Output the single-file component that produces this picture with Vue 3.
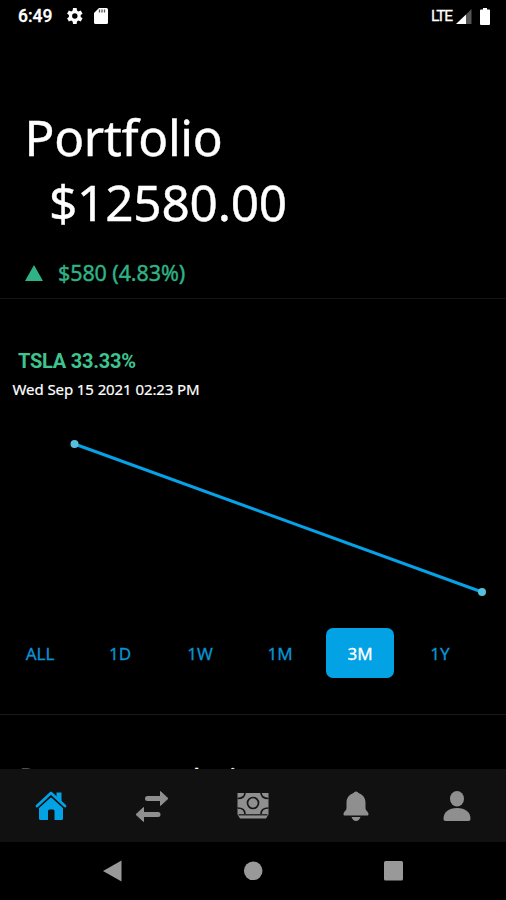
<template>
  <div class="screen">
    <header class="status-bar">
      <span class="clock">6:49</span>
      <svg class="gear" width="18" height="18" viewBox="2 2 20 20">
        <path fill="#fff" fill-rule="evenodd" d="M19.4 13a7.500 7.500 0 0 0 0-2l2.100-1.600-2-3.500-2.500 1a7.300 7.300 0 0 0-1.700-1L14.900 3h-4l-.4 2.900a7.300 7.300 0 0 0-1.700 1l-2.500-1-2 3.500L6.400 11a7.500 7.500 0 0 0 0 2l-2.100 1.600 2 3.500 2.500-1a7.300 7.300 0 0 0 1.700 1l.4 2.900h4l.4-2.900a7.300 7.300 0 0 0 1.700-1l2.500 1 2-3.500zM12.900 15a3 3 0 1 1 0-6 3 3 0 0 1 0 6z" />
      </svg>
      <svg class="card" width="14" height="16" viewBox="0 0 14 16">
        <path fill="#fff" d="M5 0h7.500Q14 0 14 1.500v13q0 1.500-1.500 1.500h-11Q0 16 0 14.500V5z" />
        <path stroke="#555" stroke-width="1.300" d="M5.500 1.500v3M8 1.500v3M10.500 1.500v3" />
      </svg>
      <span class="lte">LTE</span>
      <svg class="signal" width="16" height="15" viewBox="0 0 16 15">
        <path fill="#555" d="M10 5.500 15.500 0v15H10z" />
        <path fill="#fff" d="M0 15 10 5.500V15z" />
      </svg>
      <svg class="battery" width="10" height="17" viewBox="0 0 10 17">
        <path fill="#fff" d="M3 0h4v1.500h2q1 0 1 1V16q0 1-1 1H1q-1 0-1-1V2.500q0-1 1-1h2z" />
      </svg>
    </header>

    <main class="content">
      <section class="summary">
        <h1>Portfolio</h1>
        <p class="balance">$12580.00</p>
        <p class="gain">
          <svg width="18" height="16" viewBox="0 0 18 16"><path fill="#2fb285" d="M9 0 18 16H0z" /></svg>
          <span>$580 (4.83%)</span>
        </p>
      </section>

      <section class="history">
        <p class="ticker">TSLA 33.33%</p>
        <p class="date">Wed Sep 15 2021 02:23 PM</p>
        <svg class="chart" width="506" height="170" viewBox="0 0 506 170">
          <polyline :points="linePoints" fill="none" stroke="#06a1e6" stroke-width="3" />
          <circle v-for="p in points" :key="p.x" :cx="p.x" :cy="p.y" r="4" fill="#56bfdc" />
        </svg>
        <div class="ranges">
          <button
            v-for="r in ranges"
            :key="r"
            :class="{ active: r === selected }"
            @click="selected = r"
          >{{ r }}</button>
        </div>
      </section>

      <h2>Recommendations</h2>
    </main>

    <nav class="tabs">
      <a class="active">
        <svg width="32" height="32" viewBox="0 0 32 32">
          <path fill="currentColor" d="M16 7 28 17.500v11q0 1.500-1.500 1.500H19.500v-9q0-1.500-1.500-1.500h-3.500q-1.500 0-1.500 1.500v9H5.500Q4 30 4 28.500v-11z" />
          <path fill="currentColor" d="M21.500 2.500h5v9l-5-4.500z" />
          <path fill="none" stroke="#111" stroke-width="3.600" d="M2 17.500 16 4.700l14 12.800" />
          <path fill="none" stroke="currentColor" stroke-width="2.800" stroke-linecap="round" stroke-linejoin="round" d="M2 16 16 3 30 16" />
        </svg>
      </a>
      <a>
        <svg width="34" height="34" viewBox="0 0 34 34">
          <path fill="none" stroke="currentColor" stroke-width="5" stroke-linecap="round" d="M12.500 9.500h14M8 25.500h15" />
          <path fill="currentColor" stroke="currentColor" stroke-linejoin="round" d="M25.500 2.500 33 9.500 25.500 16.500zM8.500 18.500 1 25.500l7.500 7z" />
        </svg>
      </a>
      <a>
        <svg width="32" height="28" viewBox="0 0 32 28">
          <path fill="currentColor" d="M.5 1h31v21.500L29 26.500H3L.5 22.500z" />
          <g fill="none" stroke="#161616" stroke-width="1.700">
            <circle cx="16" cy="11" r="5.500" />
            <path d="M8 .5q0 6-7.500 6M24 .5q0 6 7.500 6M8 22q0-6-7.500-6M24 22q0-6 7.500-6" />
            <path stroke-width="1.200" d="M1.500 22.800h29" />
          </g>
        </svg>
      </a>
      <a class="shifted">
        <svg width="26" height="32" viewBox="0 0 26 32">
          <path fill="currentColor" d="M13 1.500c1.500 0 2 1.300 3.500 2C21 5.500 22.500 9 22.500 13v5c0 3 3 3.500 3 6 0 1-.5 1.500-1.500 1.500H2C1 25.500.5 25 .5 24c0-2.500 3-3 3-6v-5c0-4 1.500-7.500 6-9.500 1.500-.7 2-2 3.500-2zM8.500 27h9q-1.500 4-4.500 4t-4.500-4z" />
        </svg>
      </a>
      <a class="shifted">
        <svg width="28" height="30" viewBox="0 0 28 30">
          <ellipse cx="14" cy="7.700" rx="7" ry="7.700" fill="currentColor" />
          <path fill="currentColor" d="M.5 28c0-7 5-11 13.500-11s13.500 4 13.500 11q0 2-2 2h-23q-2 0-2-2z" />
        </svg>
      </a>
    </nav>

    <footer class="system-nav">
      <svg width="20" height="22" viewBox="0 0 20 22"><path fill="#999" d="M19.500.5v21L1 11z" /></svg>
      <svg width="20" height="20" viewBox="0 0 20 20"><circle cx="10.200" cy="9.800" r="9.300" fill="#999" /></svg>
      <svg width="20" height="20" viewBox="0 0 20 20"><rect width="19" height="19.500" rx="1.500" fill="#999" /></svg>
    </footer>
  </div>
</template>

<script setup>
import { ref, computed } from 'vue'

const ranges = ['ALL', '1D', '1W', '1M', '3M', '1Y']
const selected = ref('3M')

const points = [
  { x: 74.5, y: 24 },
  { x: 482, y: 172 }
]
const linePoints = computed(() => points.map(p => `${p.x},${p.y}`).join(' '))
</script>

<style>
body {
  margin: 0;
  background: #000;
}
</style>

<style scoped>
.screen {
  width: 506px;
  height: 900px;
  display: flex;
  flex-direction: column;
  overflow: hidden;
  background: #000;
  color: #fff;
  font-family: "Noto Sans", sans-serif;
}
h1, h2, p {
  margin: 0;
  font-weight: 400;
}
.status-bar {
  height: 32px;
  flex: none;
  display: flex;
  align-items: center;
  padding: 0 16px 0 18px;
  font-family: Roboto, sans-serif;
}
.clock {
  width: 47px;
  font-size: 17.5px;
  font-weight: 500;
  -webkit-text-stroke: 0.3px;
}
.card {
  margin-left: 11px;
}
.lte {
  margin-left: auto;
  font-size: 15.5px;
  letter-spacing: -1.1px;
  -webkit-text-stroke: 0.3px;
}
.signal {
  margin-left: 4px;
}
.battery {
  margin-left: 8px;
}
.content {
  flex: 1;
  min-height: 0;
  overflow: hidden;
}
.summary {
  height: 266px;
  border-bottom: 1px solid #131313;
}
h1 {
  padding: 72px 0 0 24.5px;
  font-size: 49.5px;
  line-height: 66px;
  letter-spacing: -0.3px;
  -webkit-text-stroke: 0.4px;
}
.balance {
  padding-left: 49px;
  font-size: 49.5px;
  line-height: 65px;
  letter-spacing: -0.2px;
  -webkit-text-stroke: 0.4px;
}
.gain {
  display: flex;
  align-items: center;
  gap: 15px;
  padding: 23px 0 0 25px;
  font-size: 21.5px;
  line-height: 30px;
  letter-spacing: -0.1px;
  color: #2fb285;
  -webkit-text-stroke: 0.4px;
}
.history {
  height: 415px;
  border-bottom: 1px solid #1a1a1a;
}
.ticker {
  padding: 48px 0 0 18px;
  font-family: Roboto, sans-serif;
  font-size: 20px;
  font-weight: 700;
  line-height: 28px;
  letter-spacing: -0.25px;
  color: #3ec48f;
}
.date {
  padding-left: 12.5px;
  font-size: 15px;
  line-height: 28px;
  letter-spacing: -0.09px;
  -webkit-text-stroke: 0.2px;
}
.chart {
  display: block;
  margin-top: 17px;
  overflow: visible;
}
.ranges {
  display: flex;
  gap: 12px;
  padding: 38px 0 0 6px;
}
.ranges button {
  width: 68px;
  height: 50px;
  padding: 0;
  border: none;
  border-radius: 7px;
  background: none;
  color: #0a93d3;
  font-family: inherit;
  font-size: 17px;
  -webkit-text-stroke: 0.3px;
}
.ranges .active {
  background: #03a2e5;
  color: #fff;
}
h2 {
  padding: 43px 0 0 19px;
  font-size: 30.6px;
  line-height: 42px;
  -webkit-text-stroke: 0.3px;
}
.tabs {
  flex: none;
  height: 73px;
  display: grid;
  grid-template-columns: repeat(5, 1fr);
  align-items: center;
  background: #111;
}
.tabs a {
  display: flex;
  justify-content: center;
  color: #8f8f8f;
}
.tabs .active {
  color: #03a2e5;
}
.tabs .shifted {
  padding-left: 3px;
}
.system-nav {
  flex: none;
  height: 58px;
  display: flex;
  align-items: center;
  justify-content: center;
  gap: 121px;
}
</style>
